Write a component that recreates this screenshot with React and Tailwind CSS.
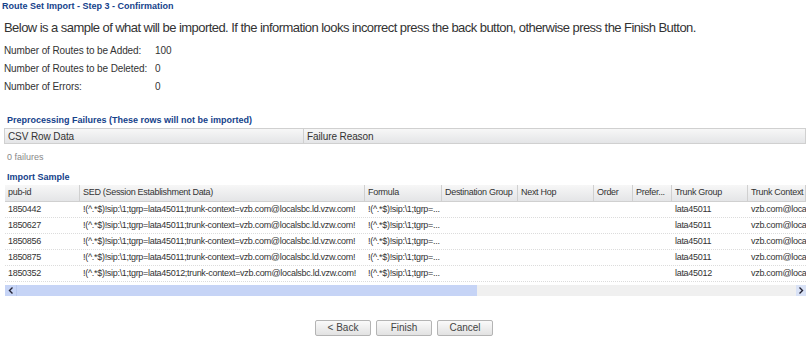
const stats = [
  { label: 'Number of Routes to be Added:', value: '100' },
  { label: 'Number of Routes to be Deleted:', value: '0' },
  { label: 'Number of Errors:', value: '0' },
];

const columns = [
  { key: 'pubId', title: 'pub-id', w: 'w-[75px]' },
  { key: 'sed', title: 'SED (Session Establishment Data)', w: 'w-[285px]' },
  { key: 'formula', title: 'Formula', w: 'w-[77px]' },
  { key: 'dest', title: 'Destination Group', w: 'w-[76px]' },
  { key: 'hop', title: 'Next Hop', w: 'w-[76px]' },
  { key: 'order', title: 'Order', w: 'w-[39px]' },
  { key: 'pref', title: 'Prefer...', w: 'w-[39px]' },
  { key: 'tg', title: 'Trunk Group', w: 'w-[76px]' },
  { key: 'tc', title: 'Trunk Context', w: 'w-[60px]' },
];

const sed = (lata) => `!(^.*$)!sip:\\1;tgrp=${lata};trunk-context=vzb.com@localsbc.ld.vzw.com!`;

const rows = [
  { pubId: '1850442', lata: 'lata45011' },
  { pubId: '1850627', lata: 'lata45011' },
  { pubId: '1850856', lata: 'lata45011' },
  { pubId: '1850875', lata: 'lata45011' },
  { pubId: '1850352', lata: 'lata45012' },
].map((r) => ({
  pubId: r.pubId,
  sed: sed(r.lata),
  formula: '!(^.*$)!sip:\\1;tgrp=...',
  dest: '',
  hop: '',
  order: '',
  pref: '',
  tg: r.lata,
  tc: 'vzb.com@localsbc.ld.vzw.com',
}));

function Btn({ children }) {
  return (
    <button className="w-[56px] h-[16px] border border-[#b4b4b4] rounded-[2px] bg-gradient-to-b from-[#fafafa] to-[#e2e2e2] text-[10px] text-[#444] leading-none">
      {children}
    </button>
  );
}

const sectionTitle = 'text-[9px] font-bold text-[#15428b] leading-[12px]';

export default function App() {
  return (
    <div className="w-[812px] h-[342px] bg-white overflow-hidden text-[#222] font-['Liberation_Sans',Arial,sans-serif]">
      <div className={`px-[2px] ${sectionTitle}`}>Route Set Import - Step 3 - Confirmation</div>

      <div className="pl-[4px] mt-[8px] text-[13px] leading-[16px] text-[#333] tracking-[-0.55px]">
        Below is a sample of what will be imported. If the information looks incorrect press the back button, otherwise press the Finish Button.
      </div>

      <div className="mt-[5px] pl-[4px] text-[10px] text-[#333] tracking-[-0.1px]">
        {stats.map((s) => (
          <div key={s.label} className="flex h-[18px] items-center">
            <span className="w-[151px] whitespace-nowrap">{s.label}</span>
            <span>{s.value}</span>
          </div>
        ))}
      </div>

      <div className={`mt-[19px] pl-[7px] ${sectionTitle}`}>Preprocessing Failures (These rows will not be imported)</div>
      <div className="ml-[4px] mt-[2px] w-[802px] h-[16px] flex border border-[#d0d0d0] bg-gradient-to-b from-[#f7f7f7] to-[#e4e5e7] text-[10px] text-[#333] tracking-[-0.1px]">
        <div className="w-[299px] border-r border-[#d0d0d0] pl-[3px] flex items-center">CSV Row Data</div>
        <div className="flex-1 pl-[3px] flex items-center">Failure Reason</div>
      </div>
      <div className="pl-[7px] mt-[7px] text-[9px] text-[#888] leading-[12px]">0 failures</div>

      <div className={`mt-[8px] pl-[7px] ${sectionTitle}`}>Import Sample</div>

      <div className="ml-[5px] mt-[2px] w-[801px] overflow-hidden text-[9px] text-[#333] tracking-[-0.3px]">
        <div className="flex h-[17px] bg-gradient-to-b from-[#f7f7f7] to-[#e4e5e7] border-b border-r border-[#d0d0d0]">
          {columns.map((c, i) => (
            <div
              key={c.key}
              className={`${c.w} shrink-0 flex items-center px-[3px] whitespace-nowrap overflow-hidden ${i < columns.length - 1 ? 'border-r border-[#d0d0d0]' : ''}`}
            >
              {c.title}
            </div>
          ))}
        </div>
        {rows.map((r) => (
          <div key={r.pubId} className="flex h-[16px] border-b border-dotted border-[#dcdcdc]">
            {columns.map((c) => (
              <div key={c.key} className={`${c.w} shrink-0 flex items-center px-[3px] whitespace-nowrap overflow-hidden`}>
                {r[c.key]}
              </div>
            ))}
          </div>
        ))}
        <div className="flex h-[11px] mt-[3px] bg-[#f0f0f0]">
          <div className="w-[11px] bg-[#c6d4f6] flex items-center justify-center">
            <svg width="6" height="7" viewBox="0 0 6 7"><path d="M4.5 0.5 L1.5 3.5 L4.5 6.5" stroke="#223" strokeWidth="1.4" fill="none" /></svg>
          </div>
          <div className="w-[461px] bg-[#c6d4f6] border-l border-[#b7c7ee]" />
          <div className="flex-1" />
          <div className="w-[10px] bg-[#d9e2f6] flex items-center justify-center">
            <svg width="6" height="7" viewBox="0 0 6 7"><path d="M1.5 0.5 L4.5 3.5 L1.5 6.5" stroke="#223" strokeWidth="1.4" fill="none" /></svg>
          </div>
        </div>
      </div>

      <div className="mt-[24px] flex gap-[5px] pl-[315px]">
        <Btn>&lt; Back</Btn>
        <Btn>Finish</Btn>
        <Btn>Cancel</Btn>
      </div>
    </div>
  );
}
